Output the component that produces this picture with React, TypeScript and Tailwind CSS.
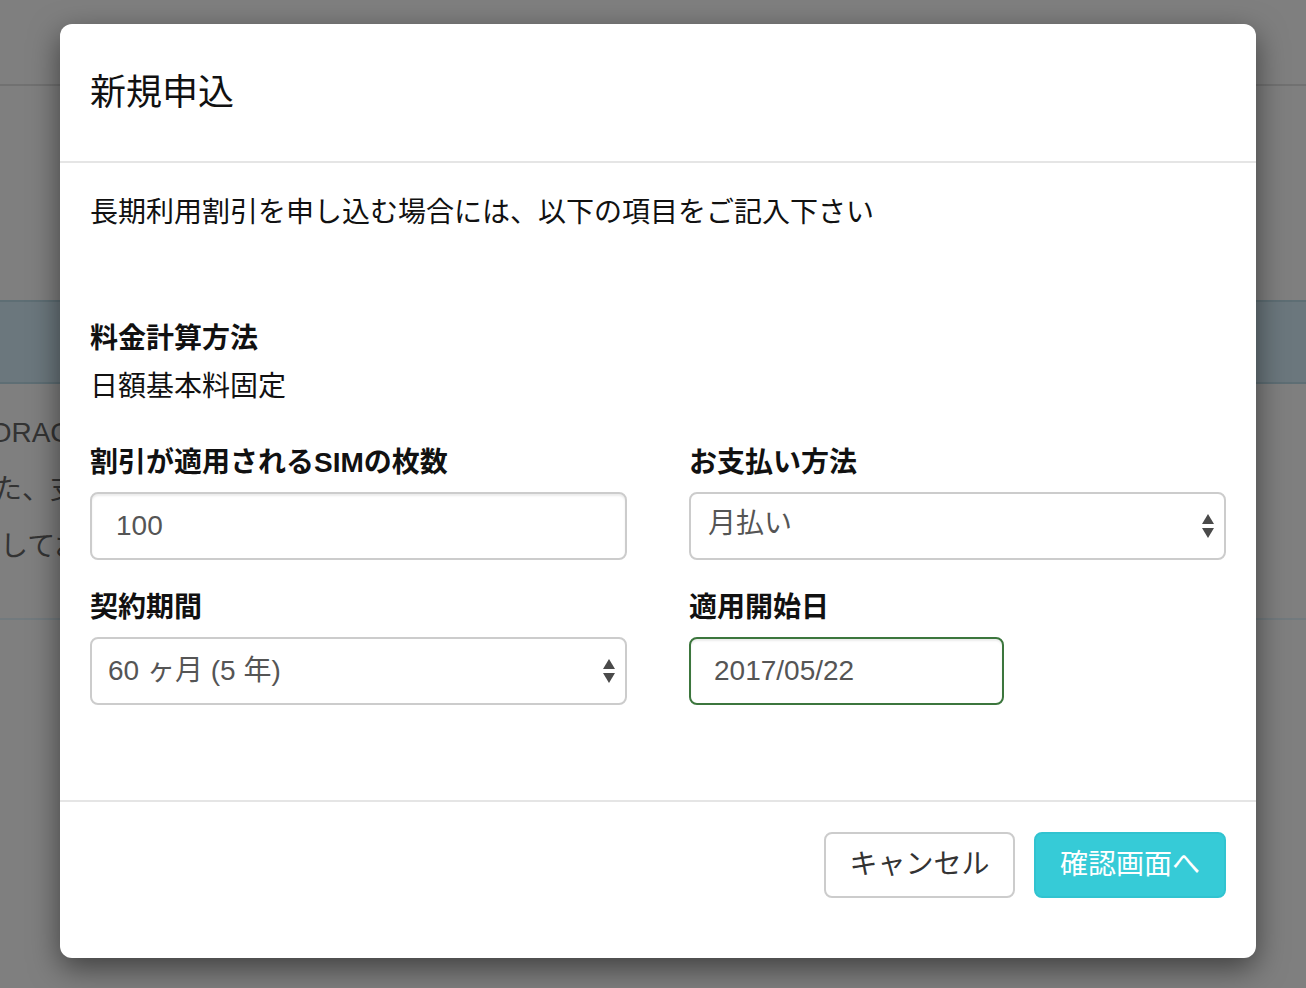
const font = "font-['Liberation_Sans','Noto_Sans_CJK_JP',sans-serif]";

function SelectArrows() {
    return (
        <svg width="14" height="26" viewBox="0 0 14 26" className="shrink-0">
            <path d="M7 1 L13 11 L1 11 Z" fill="#4a4a4a" />
            <path d="M1 15 L13 15 L7 25 Z" fill="#4a4a4a" />
        </svg>
    );
}

function Field({ label, children }: { label: string; children: React.ReactNode }) {
    return (
        <div className="flex flex-col">
            <label className="text-[28px] leading-[40px] font-bold text-[#111] mb-[9px]">{label}</label>
            {children}
        </div>
    );
}

function BackgroundPage() {
    return (
        <div className="absolute inset-0 bg-[#7f7f7f]">
            <div className="h-[86px] border-b-2 border-[#717171]" />
            <div className="h-[214px]" />
            <div className="h-[84px] bg-[#6b777d] border-y-2 border-[#5e6e74]" />
            <div className="mt-[20px] text-[28px] leading-[57px] text-[#333] whitespace-nowrap">
                <div className="-ml-[29px]">SORACOM</div>
                <div className="-ml-[34px]">また、支払</div>
                <div>しておく</div>
            </div>
            <div className="mt-[43px] border-b-2 border-[#727a7e]" />
        </div>
    );
}

export default function App() {
    return (
        <div className={`relative h-[988px] w-full overflow-hidden ${font}`}>
            <BackgroundPage />
            <div className="absolute inset-0 flex justify-center pt-[24px] pl-[10px]">
                <div className="w-[1196px] h-[934px] bg-white rounded-[12px] shadow-[0_10px_30px_rgba(0,0,0,0.5)] flex flex-col">
                    <div className="h-[139px] shrink-0 px-[30px] flex items-center border-b-2 border-[#e5e5e5]">
                        <h4 className="text-[36px] leading-[51px] text-[#111]">新規申込</h4>
                    </div>

                    <div className="flex-1 px-[30px] pt-[30px]">
                        <p className="text-[28px] leading-[40px] text-[#111]">
                            長期利用割引を申し込む場合には、以下の項目をご記入下さい
                        </p>

                        <div className="mt-[86px]">
                            <div className="text-[28px] leading-[40px] font-bold text-[#111]">料金計算方法</div>
                            <div className="mt-[8px] text-[28px] leading-[40px] text-[#111]">日額基本料固定</div>
                        </div>

                        <div className="mt-[36px] grid grid-cols-2 gap-x-[62px] gap-y-[28px] w-[1136px]">
                            <Field label="割引が適用されるSIMの枚数">
                                <div className="h-[68px] rounded-[8px] border-2 border-[#cccccc] shadow-[inset_0_2px_2px_rgba(0,0,0,0.075)] flex items-center pl-[24px] text-[28px] text-[#555]">
                                    100
                                </div>
                            </Field>
                            <Field label="お支払い方法">
                                <div className="h-[68px] rounded-[8px] border-2 border-[#cccccc] flex items-center justify-between pl-[17px] pr-[9px] text-[28px] text-[#555]">
                                    <span className="-mt-[4px]">月払い</span>
                                    <SelectArrows />
                                </div>
                            </Field>
                            <Field label="契約期間">
                                <div className="h-[68px] rounded-[8px] border-2 border-[#cccccc] flex items-center justify-between pl-[16px] pr-[9px] text-[28px] text-[#555]">
                                    <span>60 ヶ月 (5 年)</span>
                                    <SelectArrows />
                                </div>
                            </Field>
                            <Field label="適用開始日">
                                <div className="w-[315px] h-[68px] rounded-[8px] border-2 border-[#3c763d] shadow-[inset_0_2px_2px_rgba(0,0,0,0.075)] flex items-center pl-[23px] text-[28px] text-[#555]">
                                    2017/05/22
                                </div>
                            </Field>
                        </div>
                    </div>

                    <div className="h-[158px] shrink-0 border-t-2 border-[#e5e5e5] px-[30px] pt-[30px] flex justify-end items-start gap-[19px]">
                        <button className="w-[191px] h-[66px] rounded-[8px] border-2 border-[#cccccc] bg-white text-[28px] text-[#333]">
                            キャンセル
                        </button>
                        <button className="w-[192px] h-[66px] rounded-[8px] border-2 border-[#31c3d0] bg-[#36cbd7] text-[28px] text-white">
                            確認画面へ
                        </button>
                    </div>
                </div>
            </div>
        </div>
    );
}
